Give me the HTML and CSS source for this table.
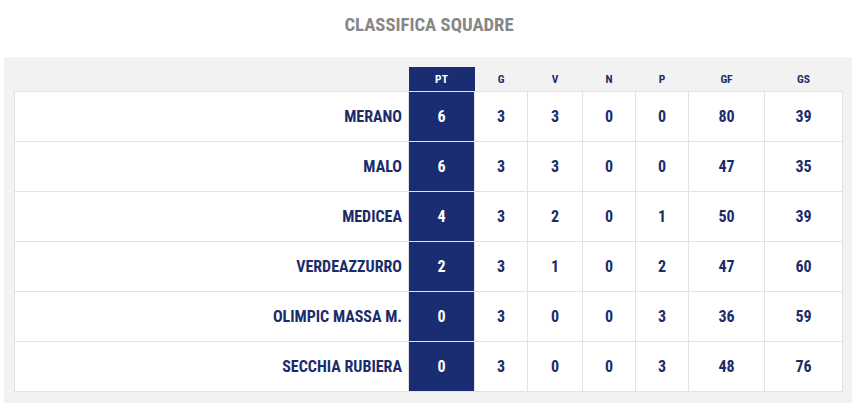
FILE: index.html
```html
<!DOCTYPE html>
<html lang="it">
<head>
<meta charset="utf-8">
<title>Classifica Squadre</title>
<link rel="stylesheet" href="styles.css">
</head>
<body>
<h2 class="title">CLASSIFICA SQUADRE</h2>
<div class="panel">
  <table class="standings">
    <colgroup>
      <col class="c-name">
      <col class="c-pt">
      <col class="c-g">
      <col class="c-v">
      <col class="c-n">
      <col class="c-p">
      <col class="c-gf">
      <col class="c-gs">
    </colgroup>
    <thead>
      <tr>
        <th class="h-name"></th>
        <th class="pt">PT</th>
        <th>G</th>
        <th>V</th>
        <th>N</th>
        <th>P</th>
        <th>GF</th>
        <th>GS</th>
      </tr>
    </thead>
    <tbody>
      <tr><td class="name">MERANO</td><td class="pt">6</td><td>3</td><td>3</td><td>0</td><td>0</td><td>80</td><td>39</td></tr>
      <tr><td class="name">MALO</td><td class="pt">6</td><td>3</td><td>3</td><td>0</td><td>0</td><td>47</td><td>35</td></tr>
      <tr><td class="name">MEDICEA</td><td class="pt">4</td><td>3</td><td>2</td><td>0</td><td>1</td><td>50</td><td>39</td></tr>
      <tr><td class="name">VERDEAZZURRO</td><td class="pt">2</td><td>3</td><td>1</td><td>0</td><td>2</td><td>47</td><td>60</td></tr>
      <tr><td class="name">OLIMPIC MASSA M.</td><td class="pt">0</td><td>3</td><td>0</td><td>0</td><td>3</td><td>36</td><td>59</td></tr>
      <tr><td class="name">SECCHIA RUBIERA</td><td class="pt">0</td><td>3</td><td>0</td><td>0</td><td>3</td><td>48</td><td>76</td></tr>
    </tbody>
  </table>
</div>
</body>
</html>
```
FILE: styles.css
```css
html, body {
  margin: 0;
  padding: 0;
  background: #ffffff;
}

body {
  font-family: "Roboto Condensed", Roboto, "Liberation Sans", sans-serif;
  font-stretch: 75%;
  color: #1c2c6a;
}

.title {
  margin: 14px 0 21px;
  font-size: 18.7px;
  line-height: 22px;
  font-weight: 700;
  color: #878787;
  text-align: center;
}

.panel {
  margin: 0 6px 0 4px;
  padding: 10px 10px 11px;
  background: #f2f2f2;
}

.standings {
  width: 828px;
  table-layout: fixed;
  border-collapse: collapse;
}

.c-name { width: 394px; }
.c-pt { width: 66px; }
.c-g { width: 53px; }
.c-v { width: 55px; }
.c-n { width: 53px; }
.c-p { width: 53px; }
.c-gf { width: 76px; }
.c-gs { width: 78px; }

.standings th {
  height: 24px;
  padding: 0;
  font-size: 11.5px;
  font-weight: 700;
  text-align: center;
  vertical-align: middle;
  color: #1c2c6a;
}

.standings th.pt {
  background: #1a2d72;
  color: #ffffff;
}

.standings td {
  height: 49px;
  padding: 0;
  border: 1px solid #e2e2e2;
  background: #ffffff;
  font-size: 16px;
  font-weight: 700;
  text-align: center;
  vertical-align: middle;
  color: #1c2c6a;
}

.standings td.name {
  text-align: right;
  padding-right: 6px;
}

.standings td.pt {
  background: #1a2d72;
  color: #ffffff;
}
```
